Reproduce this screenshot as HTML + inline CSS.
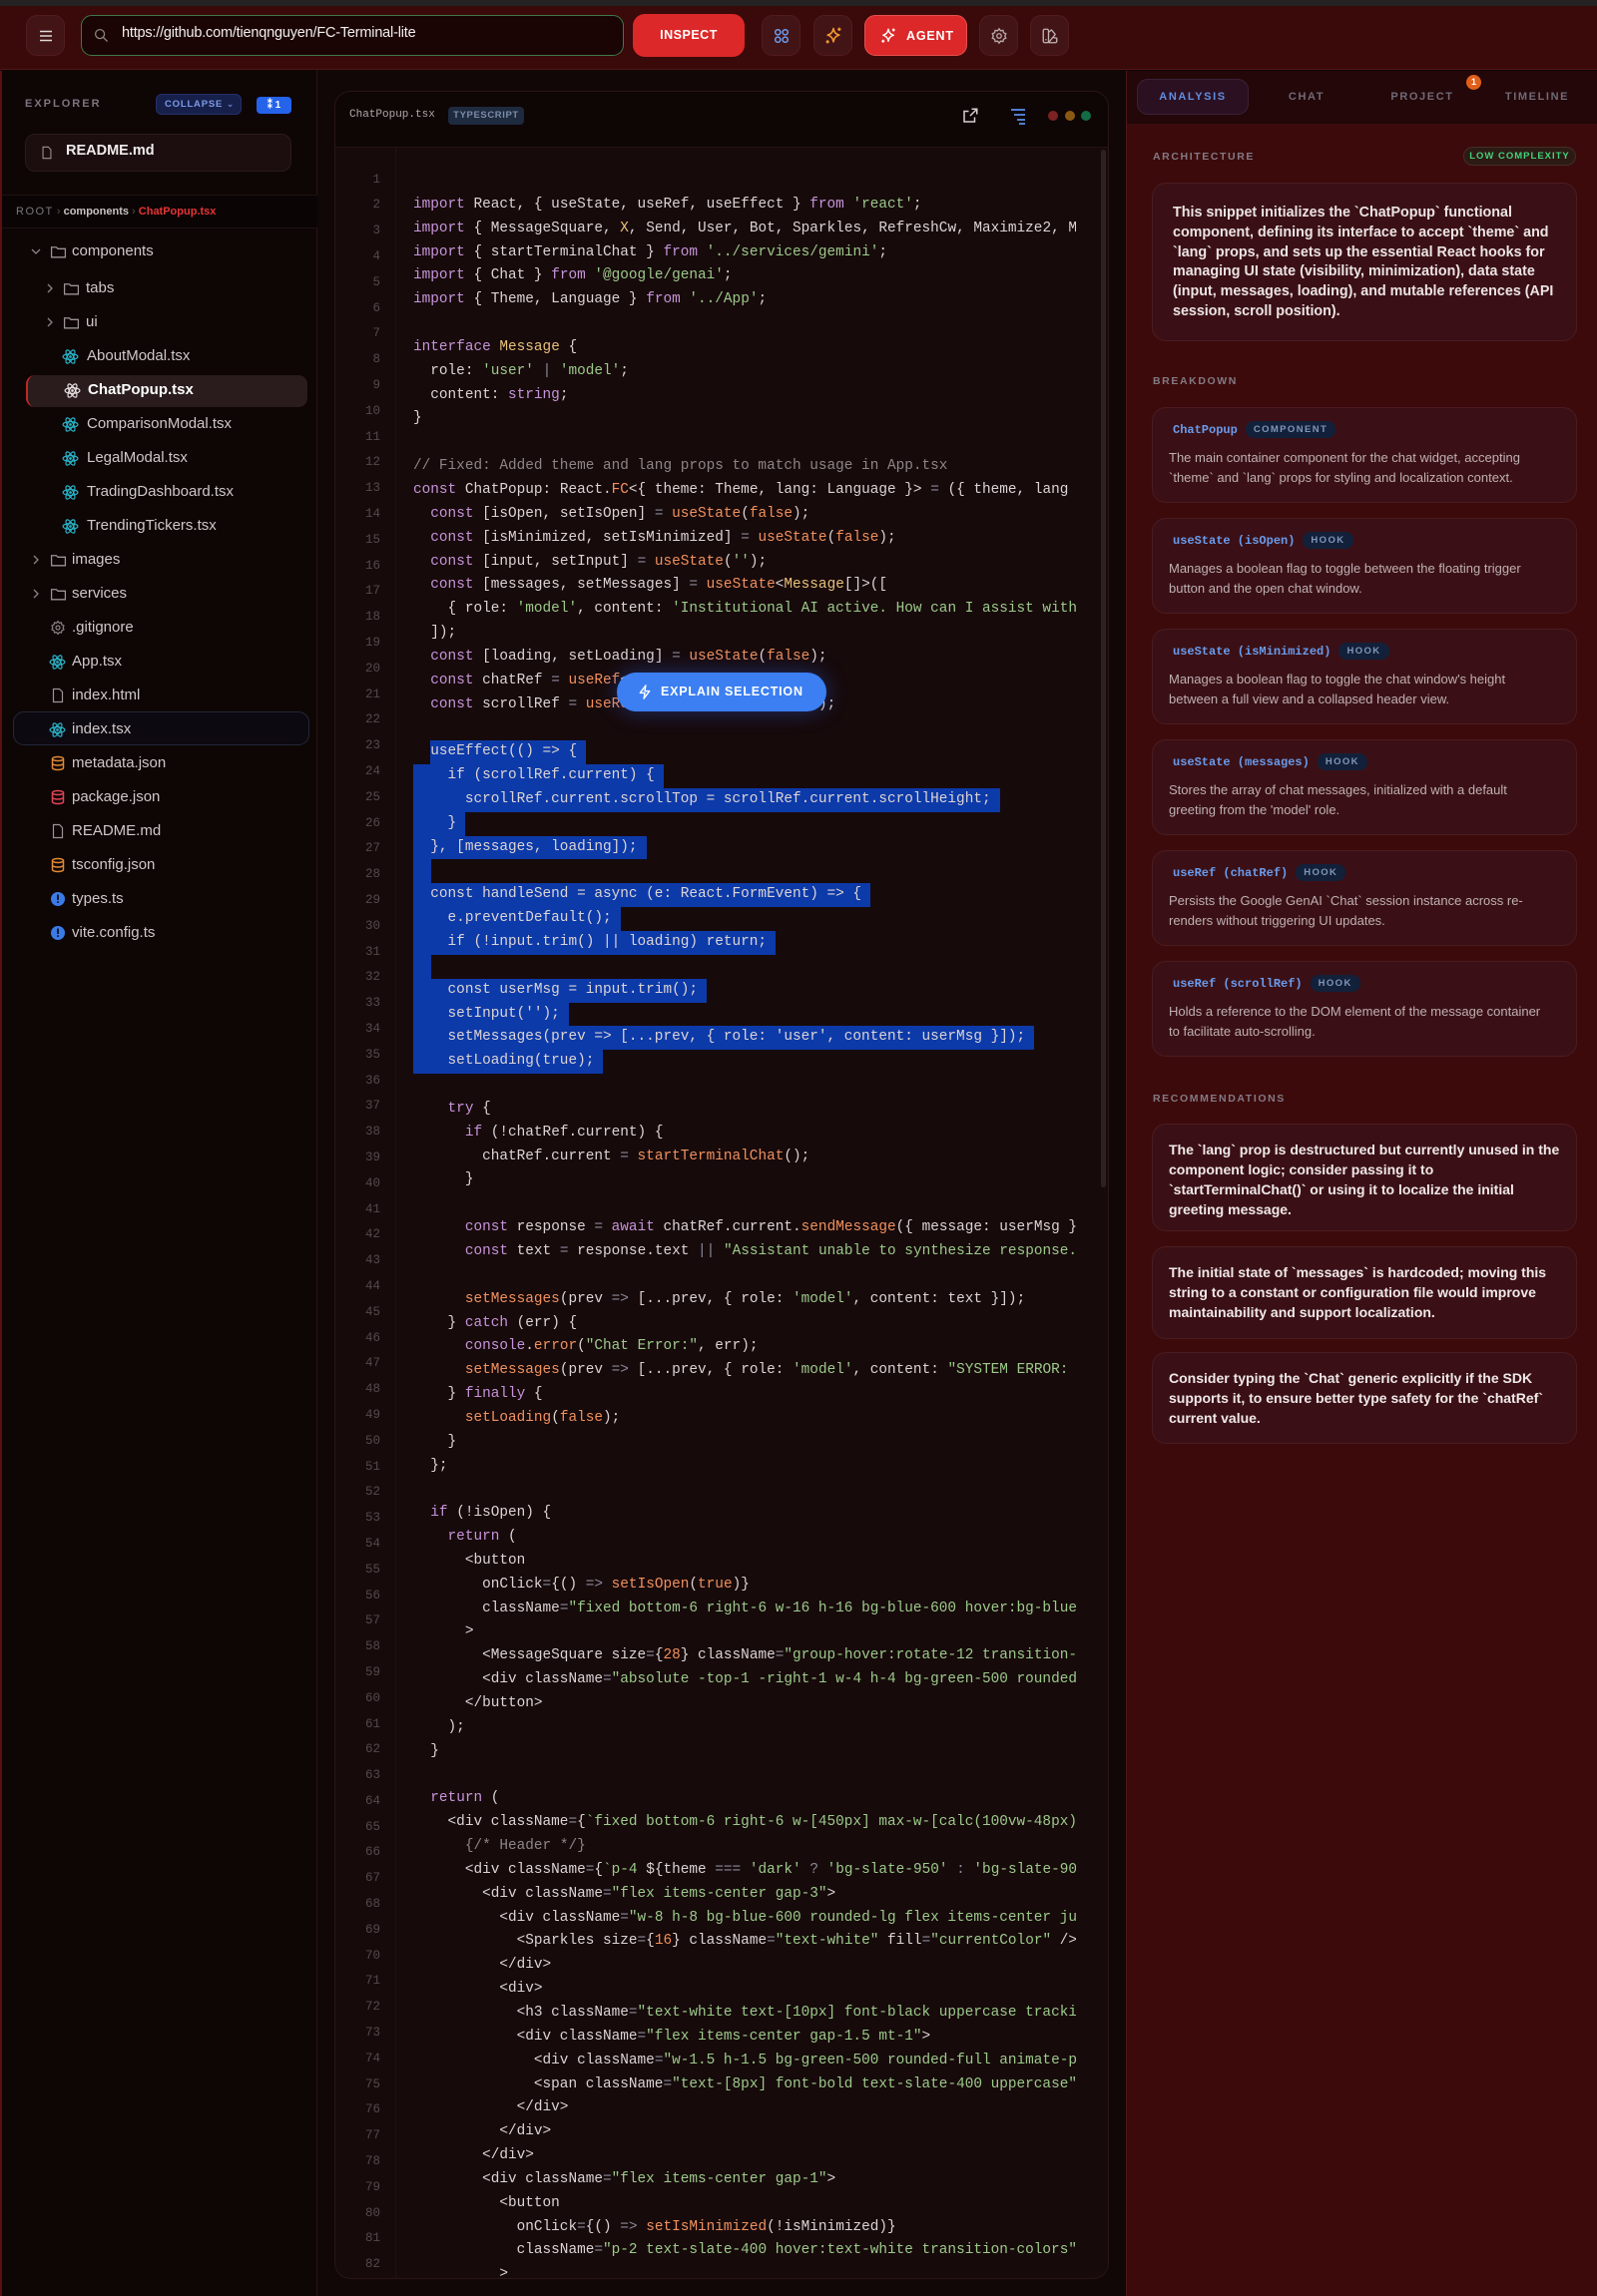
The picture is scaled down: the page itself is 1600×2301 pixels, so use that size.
<!DOCTYPE html>
<html><head><meta charset="utf-8">
<style>
*{box-sizing:border-box;margin:0;padding:0}
html,body{width:1600px;height:2301px;overflow:hidden;background:#120707;font-family:"Liberation Sans",sans-serif}
.abs{position:absolute}
kw{color:#c694d8}st{color:#9cc98a}fn{color:#f0915e}ty{color:#e8c17a}cm{color:#8d8585}nu{color:#f0905a}op{color:#8a8a9a}
.code div{height:23.85px;white-space:pre}
sel{display:inline-block;height:23.85px;background:#0d3aa9;padding-right:9px}
.lbl{font-size:11px;font-weight:bold;letter-spacing:1.6px;color:#7d7582}
.card{position:absolute;left:1154px;width:426px;background:#3a1016;border:1px solid #4a1c22;border-radius:14px}
.bt{position:absolute;left:20px;top:15px;font-family:"Liberation Mono",monospace;font-size:12px;font-weight:bold;color:#6a9bec;white-space:nowrap}
.bt em{font-style:normal;font-family:"Liberation Sans",sans-serif;font-size:9.5px;letter-spacing:1.4px;color:#7f96b8;background:#13203a;border-radius:8px;padding:3px 8px;margin-left:8px;vertical-align:1px}
.bd{position:absolute;left:16px;top:40px;font-size:13px;line-height:20px;color:#bfb0b2;white-space:nowrap}
.rt{position:absolute;left:16px;top:15px;font-size:14px;font-weight:bold;line-height:20px;color:#f0e8e8;white-space:nowrap}
.tree div{position:absolute;height:34px;line-height:34px;font-size:15px;color:#cfc8c8;white-space:nowrap}
.tree svg{position:absolute;top:10px}
.hb{position:absolute;top:15px;height:41px;width:39px;border-radius:11px;background:#431416;border:1px solid #521c1e}
</style></head><body>
<svg width="0" height="0" style="position:absolute">
<defs>
<symbol id="fold" viewBox="0 0 16 16"><path d="M1.5 3.5h4.5l1.5 1.5h7v8h-13z" fill="none" stroke="#9a9494" stroke-width="1.2"/></symbol>
<symbol id="atom" viewBox="0 0 16 16"><g fill="none" stroke="#2ab4c8" stroke-width="1.1"><ellipse cx="8" cy="8" rx="7" ry="2.7"/><ellipse cx="8" cy="8" rx="7" ry="2.7" transform="rotate(60 8 8)"/><ellipse cx="8" cy="8" rx="7" ry="2.7" transform="rotate(120 8 8)"/></g><circle cx="8" cy="8" r="1.3" fill="#2ab4c8"/></symbol>
<symbol id="atomw" viewBox="0 0 16 16"><g fill="none" stroke="#e8e0e0" stroke-width="1.1"><ellipse cx="8" cy="8" rx="7" ry="2.7"/><ellipse cx="8" cy="8" rx="7" ry="2.7" transform="rotate(60 8 8)"/><ellipse cx="8" cy="8" rx="7" ry="2.7" transform="rotate(120 8 8)"/></g><circle cx="8" cy="8" r="1.3" fill="#e8e0e0"/></symbol>
<symbol id="file" viewBox="0 0 16 16"><path d="M3.5 1.5h6l3 3v10h-9z" fill="none" stroke="#9a9494" stroke-width="1.2"/></symbol>
<symbol id="db" viewBox="0 0 16 16"><g fill="none" stroke="currentColor" stroke-width="1.5"><ellipse cx="8" cy="3.5" rx="5.5" ry="2"/><path d="M2.5 3.5v9c0 1.1 2.5 2 5.5 2s5.5-.9 5.5-2v-9M2.5 8c0 1.1 2.5 2 5.5 2s5.5-.9 5.5-2"/></g></symbol>
<symbol id="info" viewBox="0 0 16 16"><circle cx="8" cy="8" r="7" fill="#3b7be8"/><rect x="7.2" y="3.5" width="1.6" height="5.5" fill="#0e0505"/><rect x="7.2" y="10.3" width="1.6" height="1.6" fill="#0e0505"/></symbol>
<symbol id="chev" viewBox="0 0 16 16"><path d="M6 4l4 4-4 4" fill="none" stroke="#8a8484" stroke-width="1.3"/></symbol>
<symbol id="chevd" viewBox="0 0 16 16"><path d="M4 6l4 4 4-4" fill="none" stroke="#8a8484" stroke-width="1.3"/></symbol>
<symbol id="gear" viewBox="0 0 24 24"><g fill="none" stroke="currentColor" stroke-width="1.8"><circle cx="12" cy="12" r="3"/><path d="M12 2.5l2 2.6 3.2-.6.8 3.2 3 1.3-1.3 3 1.3 3-3 1.3-.8 3.2-3.2-.6-2 2.6-2-2.6-3.2.6-.8-3.2-3-1.3 1.3-3-1.3-3 3-1.3.8-3.2 3.2.6z"/></g></symbol>
<symbol id="spark" viewBox="0 0 24 24"><path d="M12 3c.8 4.5 2.5 6.6 7 8-4.5 1.4-6.2 3.5-7 8-.8-4.5-2.5-6.6-7-8 4.5-1.4 6.2-3.5 7-8z" fill="none" stroke="currentColor" stroke-width="1.9" stroke-linejoin="round"/><path d="M19 2v4M17 4h4M5 17v4M3 19h4" stroke="currentColor" stroke-width="1.8"/></symbol>
</defs></svg>

<!-- top strip & header -->
<div class="abs" style="left:0;top:0;width:1600px;height:6px;background:#242222"></div>
<div class="abs" style="left:0;top:6px;width:1600px;height:64px;background:#3a0909;border-bottom:1px solid #4d1616"></div>
<div class="hb" style="left:26px"><svg class="abs" style="left:11px;top:12px" width="16" height="16" viewBox="0 0 16 16"><path d="M2 3.5h12M2 8h12M2 12.5h12" stroke="#e0d8d8" stroke-width="1.6"/></svg></div>
<div class="abs" style="left:81px;top:15px;width:544px;height:41px;background:#1a0404;border:1.5px solid #3d7a4b;border-radius:11px"></div>
<svg class="abs" style="left:94px;top:28px" width="15" height="15" viewBox="0 0 16 16"><circle cx="6.5" cy="6.5" r="4.8" fill="none" stroke="#8a8282" stroke-width="1.4"/><path d="M10 10l4.5 4.5" stroke="#8a8282" stroke-width="1.4"/></svg>
<div class="abs" style="left:122px;top:25px;font-size:14.5px;color:#f4eeee;letter-spacing:-.2px">https://github.com/tienqnguyen/FC-Terminal-lite</div>
<div class="abs" style="left:634px;top:14px;width:112px;height:43px;background:#dc2828;border-radius:12px;color:#fff;font-weight:bold;font-size:12.5px;line-height:43px;text-align:center;letter-spacing:.5px">INSPECT</div>
<div class="hb" style="left:763px"><svg class="abs" style="left:11px;top:12px" width="16" height="16" viewBox="0 0 16 16"><g fill="none" stroke="#6a9cf0" stroke-width="1.5"><circle cx="4.3" cy="4.3" r="2.6"/><circle cx="11.7" cy="4.3" r="2.6"/><circle cx="4.3" cy="11.7" r="2.6"/><circle cx="11.7" cy="11.7" r="2.6"/></g></svg></div>
<div class="hb" style="left:815px;color:#f29a30"><svg class="abs" style="left:9px;top:10px" width="20" height="20"><use href="#spark"/></svg></div>
<div class="abs" style="left:866px;top:15px;width:103px;height:41px;background:#dc2828;border:1px solid #e85050;border-radius:11px;color:#fff;font-weight:bold;font-size:12.5px;line-height:40px;letter-spacing:.8px"><svg class="abs" style="left:14px;top:11px;color:#fff" width="18" height="18"><use href="#spark"/></svg><span style="position:absolute;left:41px">AGENT</span></div>
<div class="hb" style="left:981px;color:#b8aaaa"><svg class="abs" style="left:10px;top:11px" width="18" height="18"><use href="#gear"/></svg></div>
<div class="hb" style="left:1032px"><svg class="abs" style="left:10px;top:11px" width="18" height="18" viewBox="0 0 24 24"><g fill="none" stroke="#c0b4b4" stroke-width="1.8" stroke-linejoin="round"><rect x="3" y="3" width="7" height="18" rx="2"/><path d="M10 7l4-3 5 6-9 11M10 21h9a2 2 0 0 0 2-2v-4l-5-1"/></g><circle cx="6.5" cy="17" r="1" fill="#c0b4b4"/></svg></div>

<!-- sidebar -->
<div class="abs" style="left:0;top:71px;width:318px;height:2230px;background:#0e0505;border-right:1px solid #2a1515;border-left:2px solid #5a1010"></div>
<div class="abs lbl" style="left:25px;top:98px;color:#7a7680;letter-spacing:2px">EXPLORER</div>
<div class="abs" style="left:156px;top:94px;width:86px;height:21px;background:#16204a;border:1px solid #24306a;border-radius:6px;color:#7d9ae8;font-size:9.5px;font-weight:bold;letter-spacing:.8px;line-height:19px;padding-left:8px">COLLAPSE <span style="font-weight:normal">⌄</span></div>
<div class="abs" style="left:257px;top:97px;width:35px;height:17px;background:#2563eb;border-radius:4px;color:#fff;font-size:10px;font-weight:bold;line-height:17px;text-align:center">⁑ 1</div>
<div class="abs" style="left:25px;top:134px;width:267px;height:38px;background:#1c0e0f;border:1px solid #2a1a1c;border-radius:10px"></div>
<svg class="abs" style="left:40px;top:145px" width="14" height="16"><use href="#file"/></svg>
<div class="abs" style="left:66px;top:143px;font-size:14.5px;font-weight:bold;color:#f0ecec">README.md</div>
<div class="abs" style="left:2px;top:195px;width:316px;height:34px;background:#0b0404;border-top:1px solid #1e1212;border-bottom:1px solid #1e1212"></div>
<div class="abs" style="left:16px;top:206px;font-size:11px;white-space:nowrap"><span style="color:#7a7680;letter-spacing:1.5px">ROOT</span> <span style="color:#555">›</span> <span style="color:#c8c2c2;font-weight:bold">components</span> <span style="color:#555">›</span> <span style="color:#e53535;font-weight:bold">ChatPopup.tsx</span></div>
<div class="abs" style="left:26px;top:376px;width:282px;height:32px;background:#2a1c1d;border-left:2px solid #c02828;border-radius:9px"></div>
<div class="abs" style="left:13px;top:713px;width:297px;height:34px;background:#0d0910;border:1px solid #222838;border-radius:11px"></div>
<div class="tree">
<svg style="left:28px;top:244px" width="16" height="16"><use href="#chevd"/></svg><svg style="left:50px;top:244px" width="17" height="17"><use href="#fold"/></svg><div style="left:72px;top:235px">components</div>
<svg style="left:42px;top:281px" width="16" height="16"><use href="#chev"/></svg><svg style="left:63px;top:281px" width="17" height="17"><use href="#fold"/></svg><div style="left:86px;top:272px">tabs</div>
<svg style="left:42px;top:315px" width="16" height="16"><use href="#chev"/></svg><svg style="left:63px;top:315px" width="17" height="17"><use href="#fold"/></svg><div style="left:86px;top:306px">ui</div>
<svg style="left:62px;top:349px" width="17" height="17"><use href="#atom"/></svg><div style="left:87px;top:340px">AboutModal.tsx</div>
<svg style="left:64px;top:383px" width="17" height="17"><use href="#atomw"/></svg><div style="left:88px;top:374px;color:#fff;font-weight:bold">ChatPopup.tsx</div>
<svg style="left:62px;top:417px" width="17" height="17"><use href="#atom"/></svg><div style="left:87px;top:408px">ComparisonModal.tsx</div>
<svg style="left:62px;top:451px" width="17" height="17"><use href="#atom"/></svg><div style="left:87px;top:442px">LegalModal.tsx</div>
<svg style="left:62px;top:485px" width="17" height="17"><use href="#atom"/></svg><div style="left:87px;top:476px">TradingDashboard.tsx</div>
<svg style="left:62px;top:519px" width="17" height="17"><use href="#atom"/></svg><div style="left:87px;top:510px">TrendingTickers.tsx</div>
<svg style="left:28px;top:553px" width="16" height="16"><use href="#chev"/></svg><svg style="left:50px;top:553px" width="17" height="17"><use href="#fold"/></svg><div style="left:72px;top:544px">images</div>
<svg style="left:28px;top:587px" width="16" height="16"><use href="#chev"/></svg><svg style="left:50px;top:587px" width="17" height="17"><use href="#fold"/></svg><div style="left:72px;top:578px">services</div>
<svg style="left:50px;top:621px;color:#8a8484" width="16" height="16"><use href="#gear"/></svg><div style="left:72px;top:612px">.gitignore</div>
<svg style="left:49px;top:655px" width="17" height="17"><use href="#atom"/></svg><div style="left:72px;top:646px">App.tsx</div>
<svg style="left:50px;top:689px" width="16" height="16"><use href="#file"/></svg><div style="left:72px;top:680px">index.html</div>
<svg style="left:49px;top:723px" width="17" height="17"><use href="#atom"/></svg><div style="left:72px;top:714px">index.tsx</div>
<svg style="left:50px;top:757px;color:#e08a35" width="16" height="16"><use href="#db"/></svg><div style="left:72px;top:748px">metadata.json</div>
<svg style="left:50px;top:791px;color:#e04555" width="16" height="16"><use href="#db"/></svg><div style="left:72px;top:782px">package.json</div>
<svg style="left:50px;top:825px" width="16" height="16"><use href="#file"/></svg><div style="left:72px;top:816px">README.md</div>
<svg style="left:50px;top:859px;color:#e08a35" width="16" height="16"><use href="#db"/></svg><div style="left:72px;top:850px">tsconfig.json</div>
<svg style="left:50px;top:893px" width="16" height="16"><use href="#info"/></svg><div style="left:72px;top:884px">types.ts</div>
<svg style="left:50px;top:927px" width="16" height="16"><use href="#info"/></svg><div style="left:72px;top:918px">vite.config.ts</div>
</div>

<!-- code card -->
<div class="abs" style="left:335px;top:91px;width:776px;height:2193px;background:#170a0b;border:1px solid #2a1616;border-radius:16px;overflow:hidden">
 <div class="abs" style="left:0;top:0;width:776px;height:56px;background:#0e0505;border-bottom:1px solid #241212"></div>
 <div class="abs" style="left:60px;top:56px;width:1px;height:2140px;background:#221313"></div>
 <div class="abs" style="left:767px;top:58px;width:5px;height:1040px;background:#2c2222;border-radius:3px"></div>
</div>
<div class="abs" style="left:350px;top:109px;font-family:'Liberation Mono',monospace;font-size:11px;color:#b0a8a8">ChatPopup.tsx</div>
<div class="abs" style="left:449px;top:107px;width:76px;height:18px;background:#1e2a3e;border-radius:4px;color:#7c8ca8;font-size:9.5px;font-weight:bold;letter-spacing:.6px;line-height:18px;text-align:center">TYPESCRIPT</div>
<svg class="abs" style="left:963px;top:107px" width="18" height="18" viewBox="0 0 24 24"><g fill="none" stroke="#d8d0d0" stroke-width="2"><path d="M14 3h7v7M21 3l-9 9M18 14v6H4V6h6"/></g></svg>
<svg class="abs" style="left:1011px;top:107px" width="18" height="18" viewBox="0 0 18 18"><path d="M2 3h14M5 8h11M8 13h8M10 17h6" stroke="#5b8fe8" stroke-width="1.8"/></svg>
<div class="abs" style="left:1050px;top:111px;width:10px;height:10px;border-radius:50%;background:#7c2222"></div>
<div class="abs" style="left:1067px;top:111px;width:10px;height:10px;border-radius:50%;background:#8a5812"></div>
<div class="abs" style="left:1083px;top:111px;width:10px;height:10px;border-radius:50%;background:#146c44"></div>

<div class="abs" style="left:335px;top:167.7px;width:46px;text-align:right;font-family:'Liberation Mono',monospace;font-size:12.5px;line-height:25.8px;color:#544a4b;white-space:pre">1
2
3
4
5
6
7
8
9
10
11
12
13
14
15
16
17
18
19
20
21
22
23
24
25
26
27
28
29
30
31
32
33
34
35
36
37
38
39
40
41
42
43
44
45
46
47
48
49
50
51
52
53
54
55
56
57
58
59
60
61
62
63
64
65
66
67
68
69
70
71
72
73
74
75
76
77
78
79
80
81
82</div>

<div class="abs code" style="left:414px;top:170px;width:664px;height:2112px;overflow:hidden;font-family:'Liberation Mono',monospace;font-size:14.4px;line-height:23.85px;color:#dcd4d4">
<div> </div>
<div><kw>import</kw> React, { useState, useRef, useEffect } <kw>from</kw> <st>'react'</st>;</div>
<div><kw>import</kw> { MessageSquare, <ty>X</ty>, Send, User, Bot, Sparkles, RefreshCw, Maximize2, Minimize2 } <kw>from</kw> <st>'lucide-react'</st>;</div>
<div><kw>import</kw> { startTerminalChat } <kw>from</kw> <st>'../services/gemini'</st>;</div>
<div><kw>import</kw> { Chat } <kw>from</kw> <st>'@google/genai'</st>;</div>
<div><kw>import</kw> { Theme, Language } <kw>from</kw> <st>'../App'</st>;</div>
<div> </div>
<div><kw>interface</kw> <ty>Message</ty> {</div>
<div>  role: <st>'user'</st> <op>|</op> <st>'model'</st>;</div>
<div>  content: <kw>string</kw>;</div>
<div>}</div>
<div> </div>
<div><cm>// Fixed: Added theme and lang props to match usage in App.tsx</cm></div>
<div><kw>const</kw> ChatPopup: React.<fn>FC</fn>&lt;{ theme: Theme, lang: Language }&gt; <op>=</op> ({ theme, lang }) <op>=&gt;</op> {</div>
<div>  <kw>const</kw> [isOpen, setIsOpen] <op>=</op> <fn>useState</fn>(<nu>false</nu>);</div>
<div>  <kw>const</kw> [isMinimized, setIsMinimized] <op>=</op> <fn>useState</fn>(<nu>false</nu>);</div>
<div>  <kw>const</kw> [input, setInput] <op>=</op> <fn>useState</fn>(<st>''</st>);</div>
<div>  <kw>const</kw> [messages, setMessages] <op>=</op> <fn>useState</fn>&lt;<ty>Message</ty>[]&gt;([</div>
<div>    { role: <st>'model'</st>, content: <st>'Institutional AI active. How can I assist with your analysis?'</st> }</div>
<div>  ]);</div>
<div>  <kw>const</kw> [loading, setLoading] <op>=</op> <fn>useState</fn>(<nu>false</nu>);</div>
<div>  <kw>const</kw> chatRef <op>=</op> <fn>useRef</fn>&lt;Chat | <kw>null</kw>&gt;(<kw>null</kw>);</div>
<div>  <kw>const</kw> scrollRef <op>=</op> <fn>useRef</fn>&lt;HTMLDivElement&gt;(<kw>null</kw>);</div>
<div> </div>
<div>  <sel>useEffect(() =&gt; {</sel></div>
<div><sel>    if (scrollRef.current) {</sel></div>
<div><sel>      scrollRef.current.scrollTop = scrollRef.current.scrollHeight;</sel></div>
<div><sel>    }</sel></div>
<div><sel>  }, [messages, loading]);</sel></div>
<div><sel> </sel></div>
<div><sel>  const handleSend = async (e: React.FormEvent) =&gt; {</sel></div>
<div><sel>    e.preventDefault();</sel></div>
<div><sel>    if (!input.trim() || loading) return;</sel></div>
<div><sel> </sel></div>
<div><sel>    const userMsg = input.trim();</sel></div>
<div><sel>    setInput('');</sel></div>
<div><sel>    setMessages(prev =&gt; [...prev, { role: 'user', content: userMsg }]);</sel></div>
<div><sel>    setLoading(true);</sel></div>
<div> </div>
<div>    <kw>try</kw> {</div>
<div>      <kw>if</kw> (!chatRef.current) {</div>
<div>        chatRef.current <op>=</op> <fn>startTerminalChat</fn>();</div>
<div>      }</div>
<div> </div>
<div>      <kw>const</kw> response <op>=</op> <kw>await</kw> chatRef.current.<fn>sendMessage</fn>({ message: userMsg });</div>
<div>      <kw>const</kw> text <op>=</op> response.text <op>||</op> <st>"Assistant unable to synthesize response."</st>;</div>
<div> </div>
<div>      <fn>setMessages</fn>(prev <op>=&gt;</op> [...prev, { role: <st>'model'</st>, content: text }]);</div>
<div>    } <kw>catch</kw> (err) {</div>
<div>      <kw>console</kw>.<fn>error</fn>(<st>"Chat Error:"</st>, err);</div>
<div>      <fn>setMessages</fn>(prev <op>=&gt;</op> [...prev, { role: <st>'model'</st>, content: <st>"SYSTEM ERROR: Connection lost."</st> }]);</div>
<div>    } <kw>finally</kw> {</div>
<div>      <fn>setLoading</fn>(<nu>false</nu>);</div>
<div>    }</div>
<div>  };</div>
<div> </div>
<div>  <kw>if</kw> (!isOpen) {</div>
<div>    <kw>return</kw> (</div>
<div>      &lt;button</div>
<div>        onClick<op>=</op>{() <op>=&gt;</op> <fn>setIsOpen</fn>(<nu>true</nu>)}</div>
<div>        className<op>=</op><st>"fixed bottom-6 right-6 w-16 h-16 bg-blue-600 hover:bg-blue-500 rounded-full"</st></div>
<div>      &gt;</div>
<div>        &lt;MessageSquare size<op>=</op>{<nu>28</nu>} className<op>=</op><st>"group-hover:rotate-12 transition-transform"</st> /&gt;</div>
<div>        &lt;div className<op>=</op><st>"absolute -top-1 -right-1 w-4 h-4 bg-green-500 rounded-full"</st> /&gt;</div>
<div>      &lt;/button&gt;</div>
<div>    );</div>
<div>  }</div>
<div> </div>
<div>  <kw>return</kw> (</div>
<div>    &lt;div className<op>=</op>{<st>`fixed bottom-6 right-6 w-[450px] max-w-[calc(100vw-48px)]</st></div>
<div>      <cm>{/* Header */}</cm></div>
<div>      &lt;div className<op>=</op>{<st>`p-4 </st>${theme <op>===</op> <st>'dark'</st> <op>?</op> <st>'bg-slate-950'</st> <op>:</op> <st>'bg-slate-900'</st>}</div>
<div>        &lt;div className<op>=</op><st>"flex items-center gap-3"</st>&gt;</div>
<div>          &lt;div className<op>=</op><st>"w-8 h-8 bg-blue-600 rounded-lg flex items-center justify-center"</st>&gt;</div>
<div>            &lt;Sparkles size<op>=</op>{<nu>16</nu>} className<op>=</op><st>"text-white"</st> fill<op>=</op><st>"currentColor"</st> /&gt;</div>
<div>          &lt;/div&gt;</div>
<div>          &lt;div&gt;</div>
<div>            &lt;h3 className<op>=</op><st>"text-white text-[10px] font-black uppercase tracking-widest"</st>&gt;</div>
<div>            &lt;div className<op>=</op><st>"flex items-center gap-1.5 mt-1"</st>&gt;</div>
<div>              &lt;div className<op>=</op><st>"w-1.5 h-1.5 bg-green-500 rounded-full animate-pulse"</st> /&gt;</div>
<div>              &lt;span className<op>=</op><st>"text-[8px] font-bold text-slate-400 uppercase"</st>&gt;</div>
<div>            &lt;/div&gt;</div>
<div>          &lt;/div&gt;</div>
<div>        &lt;/div&gt;</div>
<div>        &lt;div className<op>=</op><st>"flex items-center gap-1"</st>&gt;</div>
<div>          &lt;button</div>
<div>            onClick<op>=</op>{() <op>=&gt;</op> <fn>setIsMinimized</fn>(!isMinimized)}</div>
<div>            className<op>=</op><st>"p-2 text-slate-400 hover:text-white transition-colors"</st></div>
<div>          &gt;</div>
</div>

<div class="abs" style="left:618px;top:674px;width:210px;height:39px;background:#3b7ff2;border-radius:20px;box-shadow:0 0 22px rgba(40,90,220,.45);color:#fff;font-size:12.5px;font-weight:bold;letter-spacing:.8px;line-height:39px">
<svg class="abs" style="left:21px;top:12px" width="14" height="15" viewBox="0 0 14 16"><path d="M8 1L2 9h5l-1 6 6-8H7z" fill="none" stroke="#fff" stroke-width="1.5" stroke-linejoin="round"/></svg>
<span style="position:absolute;left:44px">EXPLAIN SELECTION</span></div>

<!-- right panel -->
<div class="abs" style="left:1128px;top:71px;width:472px;height:2230px;background:#3c0a0b;border-left:1px solid #4d1818"></div>
<div class="abs" style="left:1129px;top:71px;width:471px;height:54px;background:#230709;border-bottom:1px solid #3a1012"></div>
<div class="abs" style="left:1139px;top:79px;width:112px;height:36px;background:#2b1022;border:1px solid #3c2236;border-radius:11px"></div>
<div class="abs lbl" style="left:1139px;top:91px;width:112px;text-align:center;color:#5f8ee0">ANALYSIS</div>
<div class="abs lbl" style="left:1269px;top:91px;width:80px;text-align:center;color:#706a78">CHAT</div>
<div class="abs lbl" style="left:1385px;top:91px;width:80px;text-align:center;color:#706a78">PROJECT</div>
<div class="abs" style="left:1469px;top:75px;width:15px;height:15px;border-radius:50%;background:#e0601a;color:#fff;font-size:9px;font-weight:bold;text-align:center;line-height:15px">1</div>
<div class="abs lbl" style="left:1500px;top:91px;width:80px;text-align:center;color:#706a78">TIMELINE</div>

<div class="abs lbl" style="left:1155px;top:151px;font-size:10.5px;color:#837a84">ARCHITECTURE</div>
<div class="abs" style="left:1466px;top:147px;width:113px;height:19px;background:#2e1a14;border:1px solid #3f3024;border-radius:10px;color:#3fd27a;font-size:9.5px;font-weight:bold;letter-spacing:1px;line-height:17px;text-align:center">LOW COMPLEXITY</div>
<div class="card" style="top:183px;height:159px"><div class="rt" style="left:20px;top:20px;font-size:14.3px;line-height:19.8px;font-weight:bold;color:#ece4e4">This snippet initializes the `ChatPopup` functional<br>component, defining its interface to accept `theme` and<br>`lang` props, and sets up the essential React hooks for<br>managing UI state (visibility, minimization), data state<br>(input, messages, loading), and mutable references (API<br>session, scroll position).</div></div>

<div class="abs lbl" style="left:1155px;top:376px;font-size:10.5px;color:#837a84">BREAKDOWN</div>
<div class="card" style="top:408px;height:96px"><div class="bt">ChatPopup<em>COMPONENT</em></div><div class="bd">The main container component for the chat widget, accepting<br>`theme` and `lang` props for styling and localization context.</div></div>
<div class="card" style="top:519px;height:96px"><div class="bt">useState (isOpen)<em>HOOK</em></div><div class="bd">Manages a boolean flag to toggle between the floating trigger<br>button and the open chat window.</div></div>
<div class="card" style="top:630px;height:96px"><div class="bt">useState (isMinimized)<em>HOOK</em></div><div class="bd">Manages a boolean flag to toggle the chat window's height<br>between a full view and a collapsed header view.</div></div>
<div class="card" style="top:741px;height:96px"><div class="bt">useState (messages)<em>HOOK</em></div><div class="bd">Stores the array of chat messages, initialized with a default<br>greeting from the 'model' role.</div></div>
<div class="card" style="top:852px;height:96px"><div class="bt">useRef (chatRef)<em>HOOK</em></div><div class="bd">Persists the Google GenAI `Chat` session instance across re-<br>renders without triggering UI updates.</div></div>
<div class="card" style="top:963px;height:96px"><div class="bt">useRef (scrollRef)<em>HOOK</em></div><div class="bd">Holds a reference to the DOM element of the message container<br>to facilitate auto-scrolling.</div></div>

<div class="abs lbl" style="left:1155px;top:1095px;font-size:10.5px;color:#837a84">RECOMMENDATIONS</div>
<div class="card" style="top:1126px;height:108px"><div class="rt">The `lang` prop is destructured but currently unused in the<br>component logic; consider passing it to<br>`startTerminalChat()` or using it to localize the initial<br>greeting message.</div></div>
<div class="card" style="top:1249px;height:93px"><div class="rt">The initial state of `messages` is hardcoded; moving this<br>string to a constant or configuration file would improve<br>maintainability and support localization.</div></div>
<div class="card" style="top:1355px;height:92px"><div class="rt">Consider typing the `Chat` generic explicitly if the SDK<br>supports it, to ensure better type safety for the `chatRef`<br>current value.</div></div>
</body></html>
